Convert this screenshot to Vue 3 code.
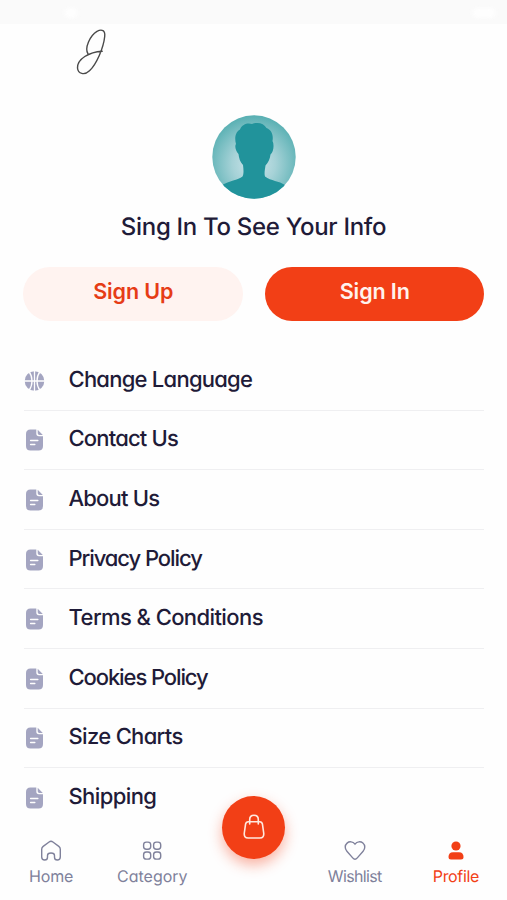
<script setup>
const items = [
  { label: 'Change Language', icon: 'ball', ls: '-0.75px' },
  { label: 'Contact Us', icon: 'doc', ls: '-0.82px' },
  { label: 'About Us', icon: 'doc', ls: '-0.8px' },
  { label: 'Privacy Policy', icon: 'doc', ls: '-1.08px' },
  { label: 'Terms & Conditions', icon: 'doc', ls: '-0.59px' },
  { label: 'Cookies Policy', icon: 'doc', ls: '-1.1px' },
  { label: 'Size Charts', icon: 'doc', ls: '-0.67px' },
  { label: 'Shipping', icon: 'doc', ls: '-0.6px' },
]
</script>

<template>
  <div class="screen">
    <div class="status"><i class="spot"></i><i class="battery"></i></div>
    <header class="top">
      <svg class="logo" width="32" height="48" viewBox="0 0 32 48">
        <path d="M12 25.8C8.300 20 14 7.500 21 3.300C26 .8 29.400 2.500 28.700 8.500C27.500 20 20.500 36 13.500 42.800C8.500 47.500 2 46 1.500 40C1.200 31 13 24 26.200 23.200" />
      </svg>
    </header>

    <section class="account">
      <svg class="avatar" width="84" height="84" viewBox="0 0 84 84">
        <defs>
          <radialGradient id="glow" cx="50%" cy="58%" r="57%">
            <stop offset="0" stop-color="#d0e6ec" />
            <stop offset="0.45" stop-color="#a6d2d7" />
            <stop offset="1" stop-color="#59b0b3" />
          </radialGradient>
          <clipPath id="disc"><circle cx="42" cy="42" r="41.7" /></clipPath>
        </defs>
        <g clip-path="url(#disc)">
          <rect width="84" height="84" fill="url(#glow)" />
          <path fill="#21939b" d="M10 70C17 66 26 65 30.5 61.5C32 59 31.500 54 31 50C28 47 27 43 26.500 39C23.500 36 22.500 31 24 29C22.500 24 23 17 28 14.500C30 9 36 7.500 40 9C46 6.500 52 8.500 54.500 13C60 15 61.500 21 60.500 26C62.500 30 61.500 37 58.500 39.500C58 44 56 48 53.500 50.500C53 54 52 59 53 61.500C59 66 67 66 73 70L78 84H6Z" />
        </g>
      </svg>
      <h1>Sing In To See Your Info</h1>
      <div class="actions">
        <button class="btn soft">Sign Up</button>
        <button class="btn solid">Sign In</button>
      </div>
    </section>

    <ul class="menu">
      <li v-for="item in items" :key="item.label">
        <svg v-if="item.icon === 'ball'" class="icon" width="21" height="22" viewBox="0 0 21 22">
          <circle cx="10.500" cy="11" r="9.800" fill="#a4a5c1" />
          <path class="cut" d="M0 11H21M10.500 0V22M5 1.500C9 7 9 15 5 20.500M16 1.500C12 7 12 15 16 20.500" />
        </svg>
        <svg v-else class="icon" width="21" height="22" viewBox="0 0 21 22">
          <path fill="#a4a5c1" d="M6.500 .5H12.300V4.500Q12.300 7.300 15 7.300H19V17Q19 21.500 14.500 21.500H6.500Q2 21.500 2 17V5Q2 .5 6.500 .5ZM13.700 .7L18.800 5.900H15.500Q13.700 5.900 13.700 4.200Z" />
          <path class="line" d="M6.600 11.500H13.800M6.600 15.600H10.800" />
        </svg>
        <span :style="{ letterSpacing: item.ls }">{{ item.label }}</span>
      </li>
    </ul>

    <nav class="tabs">
      <a class="tab">
        <svg width="24" height="24" viewBox="0 0 24 24">
          <path d="M2.700 10.300Q2.700 8.500 4.200 7.400L10.100 3Q12 1.600 13.900 3L19.800 7.400Q21.300 8.500 21.300 10.300V18Q21.300 21 18.300 21Q15.500 21 15.500 18.200V16.500Q15.500 14 12 14Q8.500 14 8.500 16.500V18.200Q8.500 21 5.700 21Q2.700 21 2.700 18Z" />
        </svg>
        <span class="home">Home</span>
      </a>
      <a class="tab">
        <svg width="24" height="24" viewBox="0 0 24 24">
          <rect x="3.600" y="3.100" width="7.100" height="7.100" rx="2.700" />
          <rect x="13.600" y="3.100" width="7.100" height="7.100" rx="2.700" />
          <rect x="3.600" y="13" width="7.100" height="7.100" rx="2.700" />
          <rect x="13.600" y="13" width="7.100" height="7.100" rx="2.700" />
        </svg>
        <span>Category</span>
      </a>
      <div class="cart">
        <svg width="24" height="28" viewBox="0 0 24 28">
          <path d="M6.300 8.700H17.700Q20 8.700 20.400 11L21.700 20Q22.300 25 17.800 25H6.200Q1.700 25 2.300 20L3.600 11Q4 8.700 6.300 8.700ZM7.700 11V6.500Q7.700 2.200 12 2.200Q16.300 2.200 16.300 6.500V11" />
        </svg>
      </div>
      <a class="tab">
        <svg width="24" height="24" viewBox="0 0 24 24">
          <path d="M12 5.100C14.100 2.400 17.700 2.100 19.900 4.100C22.400 6.300 22.300 9.900 20.100 12.200L14.300 18.900Q12 21.600 9.700 18.900L3.900 12.200C1.700 9.900 1.600 6.300 4.100 4.100C6.300 2.100 9.900 2.400 12 5.100Z" />
        </svg>
        <span class="wish">Wishlist</span>
      </a>
      <a class="tab active">
        <svg width="24" height="24" viewBox="0 0 24 24">
          <circle cx="12" cy="7" r="4.600" />
          <path d="M9 13.300H15Q19.500 13.300 19.500 18Q19.500 20.500 17 20.500H7Q4.500 20.500 4.500 18Q4.500 13.300 9 13.300Z" />
        </svg>
        <span class="prof">Profile</span>
      </a>
    </nav>
  </div>
</template>

<style>
body { margin: 0; background: #fefefe; }
</style>

<style scoped>
.screen {
  display: flex;
  flex-direction: column;
  width: 507px;
  height: 900px;
  overflow: hidden;
  background: #fefefe;
  color: #1f1b38;
  font-family: Inter, "Liberation Sans", sans-serif;
  font-feature-settings: "cv11" 1;
  font-weight: 500;
  text-rendering: geometricPrecision;
}
.status {
  display: flex;
  flex: none;
  justify-content: space-between;
  box-sizing: border-box;
  height: 24px;
  padding: 8px 11px 0 64px;
  background: #fafafa;
}
.spot, .battery { height: 10px; border-radius: 5px; background: #fefefe; filter: blur(2px); }
.spot { width: 14px; }
.battery { width: 24px; }
.top { flex: none; height: 91px; padding: 4px 0 0 76px; box-sizing: border-box; }
.logo { display: block; }
.logo path { fill: none; stroke: #4a4a4a; stroke-width: 1.4; stroke-linecap: round; }
.account { display: flex; flex: none; flex-direction: column; align-items: center; padding: 0 23px; }
.avatar { display: block; }
h1 { margin: 13px 0 0; font-size: 24px; line-height: 30px; font-weight: 500; letter-spacing: -0.3px; white-space: nowrap; }
.actions { display: grid; grid-template-columns: 1fr 1fr; gap: 22px; width: 100%; margin-top: 24.500px; }
.btn {
  height: 54px;
  padding: 0 0 5px 1px;
  border: 0;
  border-radius: 28px;
  font: inherit;
  font-size: 21.500px;
  font-weight: 600;
  letter-spacing: -0.1px;
}
.soft { background: #fff3f0; color: #e63c16; }
.solid { background: #f23f16; color: #fff3ee; }
.menu { flex: none; margin: 30.500px 23px 0 24px; padding: 0; list-style: none; }
.menu li {
  display: flex;
  align-items: center;
  box-sizing: border-box;
  height: 59.600px;
  border-bottom: 1px solid #efeff1;
  font-size: 22px;
}
.menu li:last-child { border-bottom: 0; }
.menu li:last-child span { padding-bottom: 2px; }
.menu span { padding-bottom: 1px; white-space: nowrap; }
.icon { flex: none; margin: 1px 23.500px 0 0; }
.cut { fill: none; stroke: #fefefe; stroke-width: 1.300; }
.line { fill: none; stroke: #fefefe; stroke-width: 1.500; stroke-linecap: round; }
.tabs {
  display: grid;
  grid-template-columns: repeat(5, 101.200px);
  justify-content: center;
  flex: none;
  margin-top: 11px;
}
.tab { display: flex; flex-direction: column; align-items: center; color: #7f819b; font-size: 16px; line-height: 20px; font-weight: 400; }
.tab svg { fill: none; stroke: currentColor; stroke-width: 1.400; }
.tab span { margin-top: 3px; }
.home { letter-spacing: -0.2px; }
.wish { letter-spacing: -0.65px; }
.prof { letter-spacing: -0.35px; }
.tab.active { color: #f23f16; }
.tab.active svg { fill: currentColor; stroke: none; }
.cart {
  display: flex;
  align-items: center;
  justify-content: center;
  justify-self: center;
  width: 63px;
  height: 63px;
  margin-top: -43px;
  border-radius: 50%;
  background: #f23f16;
  box-shadow: 0 6px 14px rgba(242, 63, 22, 0.4);
}
.cart svg { fill: none; stroke: #ffe9df; stroke-width: 1.600; stroke-linecap: round; }
</style>
